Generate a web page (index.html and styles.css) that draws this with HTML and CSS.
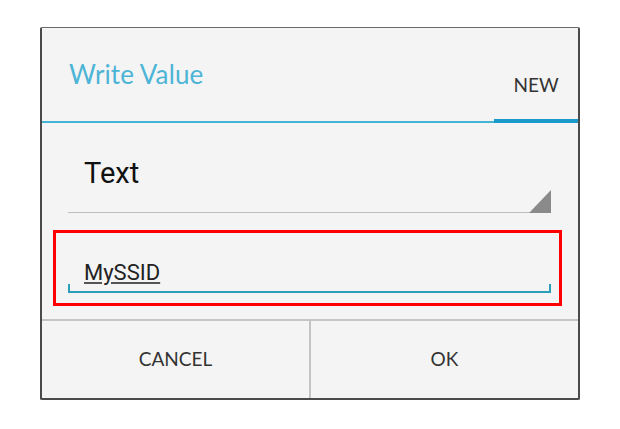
FILE: index.html
```html
<!DOCTYPE html>
<html>
<head>
<meta charset="utf-8">
<link rel="stylesheet" href="styles.css">
</head>
<body>
<div class="dialog">
  <div class="header">
    <div class="title">Write Value</div>
    <div class="tab">NEW</div>
  </div>
  <div class="content">
    <div class="spinner">
      <span class="spinner-text">Text</span>
      <svg class="spinner-arrow" width="22" height="23" viewBox="0 0 22 23"><polygon points="22,0 22,23 0,23" fill="#8a8a8a"/></svg>
    </div>
    <div class="highlight">
      <div class="edit">
        <span class="edit-text">MySSID</span>
      </div>
    </div>
  </div>
  <div class="buttons">
    <div class="btn">CANCEL</div>
    <div class="btn btn-ok">OK</div>
  </div>
</div>
</body>
</html>
```

FILE: styles.css
```css
html, body {
  margin: 0;
  padding: 0;
  background: #ffffff;
}
body {
  padding: 27px 0 0 40px;
}
.dialog {
  box-sizing: border-box;
  width: 540px;
  height: 373px;
  background: #f4f4f4;
  border: 2px solid #4a4a4a;
  border-top: 1px solid #6a6a6a;
  border-radius: 2px;
  display: flex;
  flex-direction: column;
}
.header {
  display: flex;
  height: 95px;
}
.title {
  flex: 1;
  box-sizing: border-box;
  border-bottom: 2px solid #45b3d3;
  padding: 30px 0 0 27px;
  font-family: "Source Sans Pro", Lato, sans-serif;
  font-size: 26px;
  color: #4cb4d6;
  letter-spacing: 0.1px;
}
.tab {
  width: 84px;
  box-sizing: border-box;
  border-bottom: 4px solid #1a9bcb;
  padding-top: 45px;
  text-align: center;
  font-family: Lato, sans-serif;
  font-size: 19px;
  color: #333333;
}
.content {
  flex: 1;
  display: flex;
  flex-direction: column;
}
.spinner {
  position: relative;
  margin: 0 27px 0 26px;
  height: 90px;
  box-sizing: border-box;
  border-bottom: 1px solid #bdbdbd;
  padding: 33px 0 0 16px;
}
.spinner-text {
  font-family: Roboto, sans-serif;
  font-size: 29px;
  color: #111111;
}
.spinner-arrow {
  position: absolute;
  right: 0;
  bottom: -1px;
}
.highlight {
  margin: 17px 16px 0 11px;
  height: 76px;
  box-sizing: border-box;
  border: 3px solid #ff0000;
  padding: 23px 8px 0 12px;
}
.edit {
  height: 37px;
  box-sizing: border-box;
  border-bottom: 2px solid #2aa0b8;
  position: relative;
  padding: 4px 0 0 16px;
}
.edit::before,
.edit::after {
  content: "";
  position: absolute;
  bottom: 0;
  width: 2px;
  height: 7px;
  background: #2aa0b8;
}
.edit::before {
  left: 0;
}
.edit::after {
  right: 0;
}
.edit-text {
  font-family: Roboto, sans-serif;
  font-size: 22px;
  color: #222222;
  text-decoration: underline;
  text-decoration-color: #555555;
  text-underline-offset: 2px;
}
.buttons {
  display: flex;
  height: 77px;
  border-top: 2px solid #c4c4c4;
}
.btn {
  flex: 1;
  display: flex;
  align-items: center;
  justify-content: center;
  font-family: Lato, sans-serif;
  font-size: 19px;
  color: #333333;
  padding-bottom: 2px;
}
.btn-ok {
  border-left: 2px solid #c4c4c4;
}
```
